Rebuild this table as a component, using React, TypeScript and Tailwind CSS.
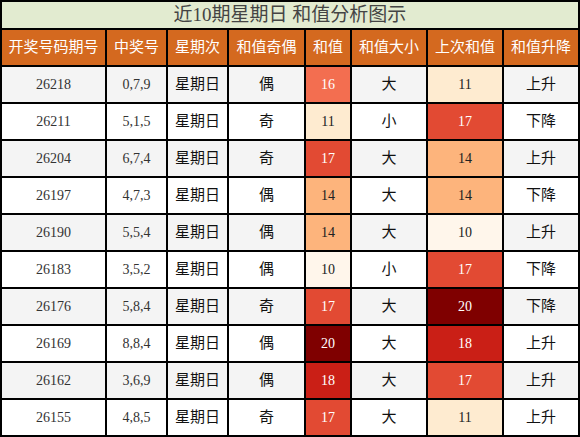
const rows = [
  { id: '26218', nums: '0,7,9', day: '星期日', oe: '偶', sum: 16, size: '大', prev: 11, trend: '上升' },
  { id: '26211', nums: '5,1,5', day: '星期日', oe: '奇', sum: 11, size: '小', prev: 17, trend: '下降' },
  { id: '26204', nums: '6,7,4', day: '星期日', oe: '奇', sum: 17, size: '大', prev: 14, trend: '上升' },
  { id: '26197', nums: '4,7,3', day: '星期日', oe: '偶', sum: 14, size: '大', prev: 14, trend: '下降' },
  { id: '26190', nums: '5,5,4', day: '星期日', oe: '偶', sum: 14, size: '大', prev: 10, trend: '上升' },
  { id: '26183', nums: '3,5,2', day: '星期日', oe: '偶', sum: 10, size: '小', prev: 17, trend: '下降' },
  { id: '26176', nums: '5,8,4', day: '星期日', oe: '奇', sum: 17, size: '大', prev: 20, trend: '下降' },
  { id: '26169', nums: '8,8,4', day: '星期日', oe: '偶', sum: 20, size: '大', prev: 18, trend: '上升' },
  { id: '26162', nums: '3,6,9', day: '星期日', oe: '偶', sum: 18, size: '大', prev: 17, trend: '上升' },
  { id: '26155', nums: '4,8,5', day: '星期日', oe: '奇', sum: 17, size: '大', prev: 11, trend: '上升' },
]

const heat: Record<number, string> = {
  10: 'bg-[#fff6eb] text-[#222]',
  11: 'bg-[#feebd0] text-[#222]',
  14: 'bg-[#fdb47c] text-[#222]',
  16: 'bg-[#f36e50] text-white',
  17: 'bg-[#e24a33] text-white',
  18: 'bg-[#ca1f16] text-white',
  20: 'bg-[#7f0000] text-white',
}

const headers = ['开奖号码期号', '中奖号', '星期次', '和值奇偶', '和值', '和值大小', '上次和值', '和值升降']

const App = () => {
  return (
    <div className="w-[580px] h-[437px] bg-black p-[2px] grid gap-[2px] grid-cols-[103px_59px_59px_75px_44px_74px_74px_74px] grid-rows-[26px_repeat(11,35px)] font-['Liberation_Serif','Noto_Sans_CJK_SC',serif]">
      <div className="col-span-8 bg-[#e2ebd0] text-[#444] text-[19px] flex items-center justify-center">
        近10期星期日 和值分析图示
      </div>

      {headers.map((h) => (
        <div key={h} className="bg-[#d4691f] text-white text-[15px] flex items-center justify-center">
          {h}
        </div>
      ))}

      {rows.map((r, i) => {
        const bg = i % 2 === 0 ? 'bg-[#f4f4f4]' : 'bg-white'
        const cell = `${bg} flex items-center justify-center`
        return [
          <div key={r.id + 'a'} className={`${cell} text-[14px] text-[#333]`}>{r.id}</div>,
          <div key={r.id + 'b'} className={`${cell} text-[14px] text-[#333]`}>{r.nums}</div>,
          <div key={r.id + 'c'} className={`${cell} text-[15px] text-[#111]`}>{r.day}</div>,
          <div key={r.id + 'd'} className={`${cell} text-[15px] text-[#111]`}>{r.oe}</div>,
          <div key={r.id + 'e'} className={`${heat[r.sum]} flex items-center justify-center text-[14px]`}>{r.sum}</div>,
          <div key={r.id + 'f'} className={`${cell} text-[15px] text-[#111]`}>{r.size}</div>,
          <div key={r.id + 'g'} className={`${heat[r.prev]} flex items-center justify-center text-[14px]`}>{r.prev}</div>,
          <div key={r.id + 'h'} className={`${cell} text-[15px] text-[#111]`}>{r.trend}</div>,
        ]
      })}
    </div>
  )
}

export default App
